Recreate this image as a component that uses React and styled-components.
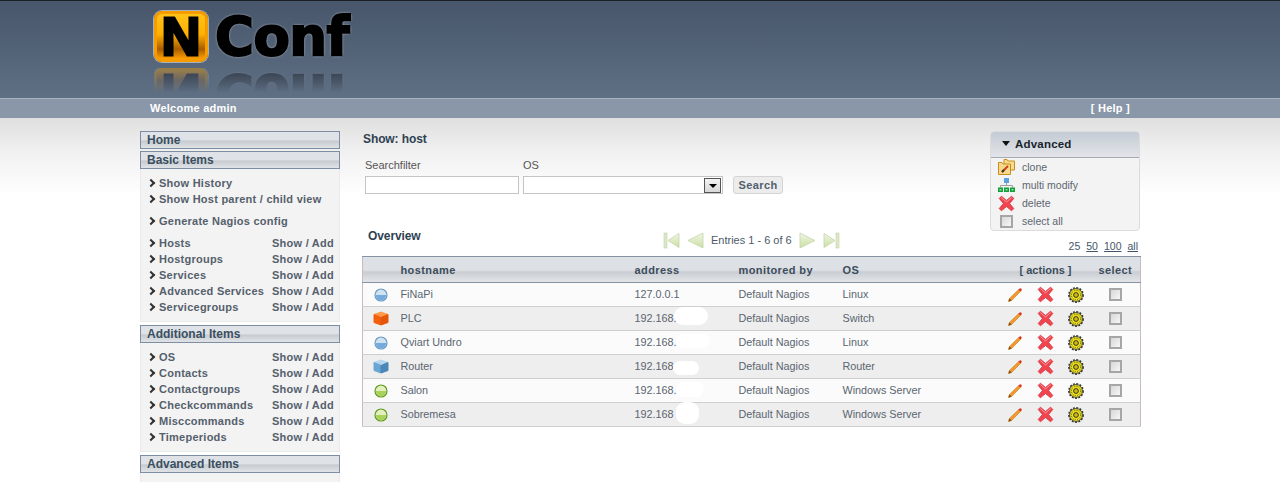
import React from 'react';
import styled, {createGlobalStyle} from 'styled-components';

const GlobalStyle = createGlobalStyle`
    html, body {
        margin: 0;
        padding: 0;
        background: #fff;
        height: 482px;
        overflow: hidden;
    }
    body {
        font-family: "Liberation Sans", Arial, sans-serif;
        font-size: 11px;
        color: #555;
    }
    * { box-sizing: border-box; }
`;

const basicTop = ['Show History', 'Show Host parent / child view'];
const basicItems = ['Hosts', 'Hostgroups', 'Services', 'Advanced Services', 'Servicegroups'];
const additionalItems = ['OS', 'Contacts', 'Contactgroups', 'Checkcommands', 'Misccommands', 'Timeperiods'];

const hosts = [
    {name: 'FiNaPi', address: '127.0.0.1', os: 'Linux', icon: 'blue'},
    {name: 'PLC', address: '192.168.', os: 'Switch', icon: 'orangeCube', blob: {l: 39, t: -11, w: 34, h: 18}},
    {name: 'Qviart Undro', address: '192.168.', os: 'Linux', icon: 'blue', blob: {l: 41, t: -8, w: 34, h: 14}},
    {name: 'Router', address: '192.168', os: 'Router', icon: 'blueCube', blob: {l: 38, t: -5, w: 26, h: 14}},
    {name: 'Salon', address: '192.168.', os: 'Windows Server', icon: 'green', blob: {l: 41, t: -8, w: 28, h: 15}},
    {name: 'Sobremesa', address: '192.168', os: 'Windows Server', icon: 'green', blob: {l: 41, t: -12, w: 23, h: 22}}
];

const Page = styled.div`
    width: 1280px;
    height: 482px;
    overflow: hidden;
    background: linear-gradient(#dfdfdf 118px, #f0f0f0 150px, #fff 195px);
`;

const Header = styled.header`
    height: 98px;
    border-top: 1px solid #1c2024;
    background: linear-gradient(#47566a, #5f6f84);
`;

const HeaderInner = styled.div`
    width: 1000px;
    margin: 0 auto;
    padding: 10px 0 0 14px;
`;

const Logo = styled.div`
    display: flex;
    align-items: center;
    gap: 7px;
    width: 204px;
    height: 51px;
    -webkit-box-reflect: below 6px linear-gradient(transparent 52%, rgba(255, 255, 255, .42));
`;

const LogoBadge = styled.span`
    flex: none;
    width: 54px;
    height: 51px;
    border-radius: 8px;
    border: 3px solid #f59c00;
    box-shadow: 0 0 0 1px #a8b0ba;
    background: linear-gradient(#ffc21a, #ffb000 45%, #a85c00 78%, #ffa000);
    color: #000;
    font: 900 54px/45px "Liberation Sans", sans-serif;
    text-align: center;
    -webkit-text-stroke: 3px #000;
`;

const LogoWord = styled.span`
    font: 700 53px/51px "DejaVu Sans", sans-serif;
    letter-spacing: -.5px;
    color: #000;
    -webkit-text-stroke: 2px #000;
    text-shadow: 0 0 3px #b6bdc6, 0 0 3px #b6bdc6;
    white-space: nowrap;
`;

const TopBar = styled.div`
    height: 20px;
    background: #8a97a8;
    border-top: 1px solid #a9b3c0;
`;

const TopBarInner = styled.div`
    width: 1000px;
    margin: 0 auto;
    padding: 0 10px;
    display: flex;
    justify-content: space-between;
    color: #fff;
    font-weight: 700;
    font-size: 11px;
    letter-spacing: .25px;
    line-height: 18px;
`;

const Layout = styled.div`
    width: 1000px;
    margin: 13px auto 0;
    display: flex;
    gap: 23px;
`;

const Sidebar = styled.nav`
    width: 200px;
    flex: none;
`;

const NavHead = styled.div`
    height: 18px;
    padding-left: 6px;
    border: 1px solid #7d8ea3;
    background: linear-gradient(#dfe3e7 50%, #c6cbd0 55%, #e0e3e6);
    color: #3b4f60;
    font-size: 12px;
    font-weight: 700;
    line-height: 16px;
    margin-bottom: 2px;
`;

const NavPanel = styled.div`
    margin: -2px 0 3px;
    padding: 6px 5px 6px 7px;
    background: #f3f3f3;
    border: 1px solid #eaeaea;
    border-top: 0;
`;

const NavRow = styled.div`
    display: flex;
    justify-content: space-between;
    height: 16px;
    line-height: 16px;
    margin-top: ${p => p.$gap || 0}px;
    color: #55606c;
    font-weight: 700;
    letter-spacing: .25px;
`;

const NavLabel = styled.span`
    &::before {
        content: '';
        display: inline-block;
        width: 4px;
        height: 4px;
        margin: 0 5px 1px 0;
        border-top: 2px solid #333;
        border-right: 2px solid #333;
        transform: rotate(45deg);
    }
`;

const Main = styled.main`
    flex: 1;
    min-width: 0;
`;

const TopArea = styled.div`
    display: flex;
    justify-content: space-between;
`;

const FilterColumn = styled.div`
    width: 598px;
`;

const ShowTitle = styled.h2`
    margin: 1px 0 0;
    font-size: 12px;
    line-height: 14px;
    color: #2f4252;
    font-weight: 700;
    letter-spacing: -.1px;
`;

const Filters = styled.div`
    display: flex;
    align-items: flex-end;
    gap: 4px;
    margin: 12px 0 0 2px;
`;

const Field = styled.label`
    display: flex;
    flex-direction: column;
    color: #555;
    line-height: 14px;
    gap: 4px;
`;

const TextInput = styled.span`
    display: block;
    width: ${p => p.$width}px;
    height: 18px;
    background: #fff;
    border: 1px solid #c4c4c4;
    position: relative;
`;

const SelectArrow = styled.span`
    position: absolute;
    right: 1px;
    top: 1px;
    width: 17px;
    height: 15px;
    background: linear-gradient(#f4f4f4, #d8d8d8);
    border: 1px solid #555;
    &::after {
        content: '';
        position: absolute;
        left: 4px;
        top: 5px;
        border: 4px solid transparent;
        border-top: 4px solid #000;
        border-bottom: 0;
    }
`;

const SearchButton = styled.button`
    width: 50px;
    height: 18px;
    margin-left: 6px;
    padding: 0;
    border: 1px solid #d4d4d4;
    border-radius: 3px;
    background: #ececec;
    color: #51606e;
    font: 700 11px/14px "Liberation Sans", sans-serif;
    letter-spacing: .4px;
`;

const OverviewRow = styled.div`
    display: flex;
    align-items: center;
    height: 20px;
    margin-top: 36px;
    padding-left: 5px;
`;

const OverviewTitle = styled.h3`
    width: 295px;
    margin: 0 0 8px;
    font-size: 12px;
    color: #2f4252;
    letter-spacing: -.1px;
`;

const Pager = styled.div`
    display: flex;
    align-items: center;
    gap: 7px;
    font-size: 11px;
    color: #4c5a68;
`;

const AdvancedBox = styled.aside`
    width: 150px;
    height: 100px;
    border: 1px solid #dcdcdc;
    border-radius: 4px;
    background: #f3f3f3;
    overflow: hidden;
`;

const AdvancedHead = styled.div`
    height: 26px;
    display: flex;
    align-items: center;
    gap: 5px;
    padding: 0 0 2px 11px;
    border-bottom: 1px solid #a4abb4;
    background: linear-gradient(#c4cbd5, #e2e4e7);
    color: #18242e;
    font-size: 11.5px;
    font-weight: 700;
    letter-spacing: .2px;
    &::before {
        content: '';
        border: 4px solid transparent;
        border-top: 5px solid #111;
        border-bottom: 0;
    }
`;

const AdvancedRow = styled.div`
    display: flex;
    align-items: center;
    height: 18px;
    color: #5c6671;
    font-size: 10.5px;
`;

const AdvancedIcon = styled.span`
    width: 31px;
    display: flex;
    justify-content: center;
    flex: none;
`;

const PageSizes = styled.div`
    display: flex;
    justify-content: flex-end;
    gap: 6px;
    padding-right: 2px;
    margin-top: 8px;
    line-height: 14px;
    font-size: 10.5px;
    color: #44566a;
`;

const PageSize = styled.span`
    text-decoration: ${p => (p.$active ? 'none' : 'underline')};
`;

const HostTable = styled.table`
    width: 778px;
    margin: 3px 0 0 -1px;
    border-collapse: collapse;
    table-layout: fixed;
    border: 1px solid #c9b9c0;
    border-top: 0;
`;

const Th = styled.th`
    height: 26px;
    padding: 0 ${p => p.$padRight || 0}px 0 1px;
    text-align: ${p => p.$align || 'left'};
    background: linear-gradient(#dde0e4 50%, #c9cdd2 58%, #e4e6e8);
    border-top: 1px solid #8592a3;
    border-bottom: 1px solid #8592a3;
    color: #3c4d5c;
    font-size: 11px;
    font-weight: 700;
    letter-spacing: ${p => (p.$tight ? 0 : '.4px')};
`;

const Tr = styled.tr`
    height: 24px;
    background: ${p => (p.$odd ? '#eeeeee' : '#fbfbfb')};
    border-bottom: 1px solid #cfcfcf;
`;

const Td = styled.td`
    padding: 0 0 2px 1px;
    color: #5a6570;
    font-size: 10.8px;
    vertical-align: middle;
`;

const IconTd = styled.td`
    padding: 0 ${p => p.$padRight || 0}px 0 0;
    text-align: ${p => p.$align || 'left'};
    vertical-align: middle;
`;

const AddressWrap = styled.span`
    position: relative;
    display: inline-block;
`;

const Blob = styled.span`
    position: absolute;
    left: ${p => p.$l}px;
    top: calc(50% + ${p => p.$t}px);
    width: ${p => p.$w}px;
    height: ${p => p.$h}px;
    background: #fff;
    border-radius: 9px;
`;

const IconCell = styled.span`
    display: flex;
    align-items: center;
    justify-content: center;
`;

const Actions = styled.span`
    display: flex;
    align-items: center;
    gap: 14px;
`;

const Check = styled.span`
    display: inline-block;
    width: 13px;
    height: 13px;
    border: 2px solid #a6a6a6;
    background: linear-gradient(135deg, #d8d8d8, #f6f6f6);
    vertical-align: middle;
`;

const Pencil = () => (
    <svg width="16" height="16" viewBox="0 0 16 16">
        <path d="M1.5 14.5 L2.4 11.4 L11.8 2.4 L13.7 4.3 L4.6 13.6 Z" fill="#f09a2c" stroke="#cf7a18" strokeWidth=".6" />
        <path d="M11.6 2.6 L12.8 1.5 Q13.6 1 14.3 1.8 Q15 2.6 14.5 3.3 L13.4 4.5 Z" fill="#e3261f" />
        <path d="M1.5 14.5 L2.4 11.4 L4.6 13.6 Z" fill="#6b4a1c" />
    </svg>
);

const Cross = ({size = 17}) => (
    <svg width={size} height={size} viewBox="0 0 17 17">
        <path d="M3.4 1.2 L8.5 5.4 L13.6 1.2 L15.8 3.4 L11.6 8.5 L15.8 13.6 L13.6 15.8 L8.5 11.6 L3.4 15.8 L1.2 13.6 L5.4 8.5 L1.2 3.4 Z" fill="#f0444e" stroke="#d4343e" strokeWidth=".8" strokeLinejoin="round" />
        <path d="M3.4 2.6 L8.5 7 L13.6 2.6" fill="none" stroke="#fb9aa0" strokeWidth="1" />
    </svg>
);

const Gear = () => (
    <svg width="16" height="16" viewBox="0 0 16 16">
        <circle cx="8" cy="8" r="6.4" fill="#efe21e" stroke="#222" strokeWidth=".8" />
        <circle cx="8" cy="8" r="7.2" fill="none" stroke="#333" strokeWidth="1.4" strokeDasharray="2 1.4" />
        <circle cx="8" cy="8" r="4.6" fill="none" stroke="#5a5610" strokeWidth=".9" strokeDasharray="1.2 1.2" />
        <circle cx="8" cy="8" r="2.4" fill="#c9bd18" stroke="#222" strokeWidth=".9" />
    </svg>
);

const Ball = ({rim, top, bottom}) => (
    <svg width="14" height="14" viewBox="0 0 14 14">
        <circle cx="7" cy="7" r="6" fill={top} stroke={rim} strokeWidth="1.2" />
        <path d="M1.8 7 H12.2 A5.2 5.2 0 0 1 1.8 7 Z" fill={bottom} />
    </svg>
);

const Cube = ({top, left, right}) => (
    <svg width="16" height="15" viewBox="0 0 16 15" strokeWidth="1" strokeLinejoin="round">
        <path d="M8 1 L15 3.5 L8 6.5 L1 3.5 Z" fill={top} stroke={top} />
        <path d="M1 3.5 L8 6.5 V14 L1 11.5 Z" fill={left} stroke={left} />
        <path d="M15 3.5 L8 6.5 V14 L15 11.5 Z" fill={right} stroke={right} />
    </svg>
);

const HostIcon = ({type}) => {
    if (type === 'blue') return <Ball rim="#6a9cc4" top="#cfe2f0" bottom="#74aadc" />;
    if (type === 'green') return <Ball rim="#5f9a22" top="#e2f0c0" bottom="#a8d25c" />;
    if (type === 'orangeCube') return <Cube top="#ff9a4a" left="#f2600e" right="#e4570a" />;
    return <Cube top="#b4d6ee" left="#6aa6d4" right="#4a86b6" />;
};

const PagerIcon = ({dir, bar}) => (
    <svg width="17" height="17" viewBox="0 0 17 17">
        <defs>
            <linearGradient id="pagerFill" x1="0" y1="0" x2="0" y2="1">
                <stop offset="0" stopColor="#f2f6e6" />
                <stop offset="1" stopColor="#c9dfa0" />
            </linearGradient>
        </defs>
        <g transform={dir === 'right' ? 'matrix(-1 0 0 1 17 0)' : undefined}>
            {bar && <rect x="1" y="1" width="3" height="15" fill="#dce8c8" stroke="#bfd2a6" strokeWidth=".6" />}
            <path d={bar ? 'M16 1.5 V15.5 L5 8.5 Z' : 'M16 1 V16 L1 8.5 Z'} fill="url(#pagerFill)" stroke="#c3d4ad" strokeWidth=".8" />
        </g>
    </svg>
);

const CloneIcon = () => (
    <svg width="17" height="16" viewBox="0 0 17 16">
        <path d="M6 .5 H9 L10 2 H16.5 V11 H6 Z" fill="#f8dc8c" stroke="#c98f1e" />
        <path d="M.5 3.5 H4 L5 5 H12.5 V15.5 H.5 Z" fill="#f6d98a" stroke="#c98f1e" />
        <path d="M4 13 L10 7" stroke="#c9401c" strokeWidth="2" />
        <path d="M4 13 L6 11" stroke="#333" strokeWidth="2" />
    </svg>
);

const TreeIcon = () => (
    <svg width="17" height="14" viewBox="0 0 17 14">
        <rect x="6" y="0" width="5" height="5" fill="#5aa2e0" />
        <path d="M8.5 5 V7.5 M2.5 9.5 V7.5 H14.5 V9.5" fill="none" stroke="#a0a0a0" />
        <rect x="0" y="9.5" width="5" height="4.5" fill="#12a03a" />
        <rect x="6" y="9.5" width="5" height="4.5" fill="#12a03a" />
        <rect x="12" y="9.5" width="5" height="4.5" fill="#12a03a" />
        <rect x="1.5" y="11" width="2" height="1.5" fill="#8fe0a8" />
        <rect x="7.5" y="11" width="2" height="1.5" fill="#8fe0a8" />
        <rect x="13.5" y="11" width="2" height="1.5" fill="#8fe0a8" />
    </svg>
);

const NavLine = ({label, gap}) => (
    <NavRow $gap={gap}>
        <NavLabel>{label}</NavLabel>
        <span>Show / Add</span>
    </NavRow>
);

export default function App() {
    return (
        <Page>
            <GlobalStyle />
            <Header>
                <HeaderInner>
                    <Logo>
                        <LogoBadge>N</LogoBadge>
                        <LogoWord>Conf</LogoWord>
                    </Logo>
                </HeaderInner>
            </Header>
            <TopBar>
                <TopBarInner>
                    <span>Welcome admin</span>
                    <span>[ Help ]</span>
                </TopBarInner>
            </TopBar>
            <Layout>
                <Sidebar>
                    <NavHead>Home</NavHead>
                    <NavHead>Basic Items</NavHead>
                    <NavPanel>
                        {basicTop.map(label => (
                            <NavRow key={label}><NavLabel>{label}</NavLabel></NavRow>
                        ))}
                        <NavRow $gap={6}><NavLabel>Generate Nagios config</NavLabel></NavRow>
                        {basicItems.map((label, i) => (
                            <NavLine key={label} label={label} gap={i === 0 ? 6 : 0} />
                        ))}
                    </NavPanel>
                    <NavHead>Additional Items</NavHead>
                    <NavPanel>
                        {additionalItems.map(label => <NavLine key={label} label={label} />)}
                    </NavPanel>
                    <NavHead>Advanced Items</NavHead>
                    <NavPanel />
                </Sidebar>
                <Main>
                    <TopArea>
                        <FilterColumn>
                            <ShowTitle>Show: host</ShowTitle>
                            <Filters>
                                <Field>Searchfilter<TextInput $width={154} /></Field>
                                <Field>OS<TextInput $width={200}><SelectArrow /></TextInput></Field>
                                <SearchButton>Search</SearchButton>
                            </Filters>
                            <OverviewRow>
                                <OverviewTitle>Overview</OverviewTitle>
                                <Pager>
                                    <PagerIcon dir="left" bar />
                                    <PagerIcon dir="left" />
                                    <span>Entries 1 - 6 of 6</span>
                                    <PagerIcon dir="right" />
                                    <PagerIcon dir="right" bar />
                                </Pager>
                            </OverviewRow>
                        </FilterColumn>
                        <div>
                            <AdvancedBox>
                                <AdvancedHead>Advanced</AdvancedHead>
                                <AdvancedRow><AdvancedIcon><CloneIcon /></AdvancedIcon>clone</AdvancedRow>
                                <AdvancedRow><AdvancedIcon><TreeIcon /></AdvancedIcon>multi modify</AdvancedRow>
                                <AdvancedRow><AdvancedIcon><Cross /></AdvancedIcon>delete</AdvancedRow>
                                <AdvancedRow><AdvancedIcon><Check /></AdvancedIcon>select all</AdvancedRow>
                            </AdvancedBox>
                            <PageSizes>
                                <PageSize $active>25</PageSize>
                                <PageSize>50</PageSize>
                                <PageSize>100</PageSize>
                                <PageSize>all</PageSize>
                            </PageSizes>
                        </div>
                    </TopArea>
                    <HostTable>
                        <colgroup>
                            <col width="37" />
                            <col width="234" />
                            <col width="104" />
                            <col width="104" />
                            <col width="165" />
                            <col width="91" />
                            <col width="43" />
                        </colgroup>
                        <thead>
                            <tr>
                                <Th />
                                <Th>hostname</Th>
                                <Th>address</Th>
                                <Th>monitored by</Th>
                                <Th>OS</Th>
                                <Th $align="center" $padRight={14} $tight>[ actions ]</Th>
                                <Th>select</Th>
                            </tr>
                        </thead>
                        <tbody>
                            {hosts.map((host, i) => (
                                <Tr key={host.name} $odd={i % 2 === 1}>
                                    <IconTd><IconCell><HostIcon type={host.icon} /></IconCell></IconTd>
                                    <Td>{host.name}</Td>
                                    <Td>
                                        <AddressWrap>
                                            {host.address}
                                            {host.blob && <Blob $l={host.blob.l} $t={host.blob.t} $w={host.blob.w} $h={host.blob.h} />}
                                        </AddressWrap>
                                    </Td>
                                    <Td>Default Nagios</Td>
                                    <Td>{host.os}</Td>
                                    <IconTd>
                                        <Actions>
                                            <Pencil />
                                            <Cross />
                                            <Gear />
                                        </Actions>
                                    </IconTd>
                                    <IconTd $align="center" $padRight={6}><Check /></IconTd>
                                </Tr>
                            ))}
                        </tbody>
                    </HostTable>
                </Main>
            </Layout>
        </Page>
    );
}
